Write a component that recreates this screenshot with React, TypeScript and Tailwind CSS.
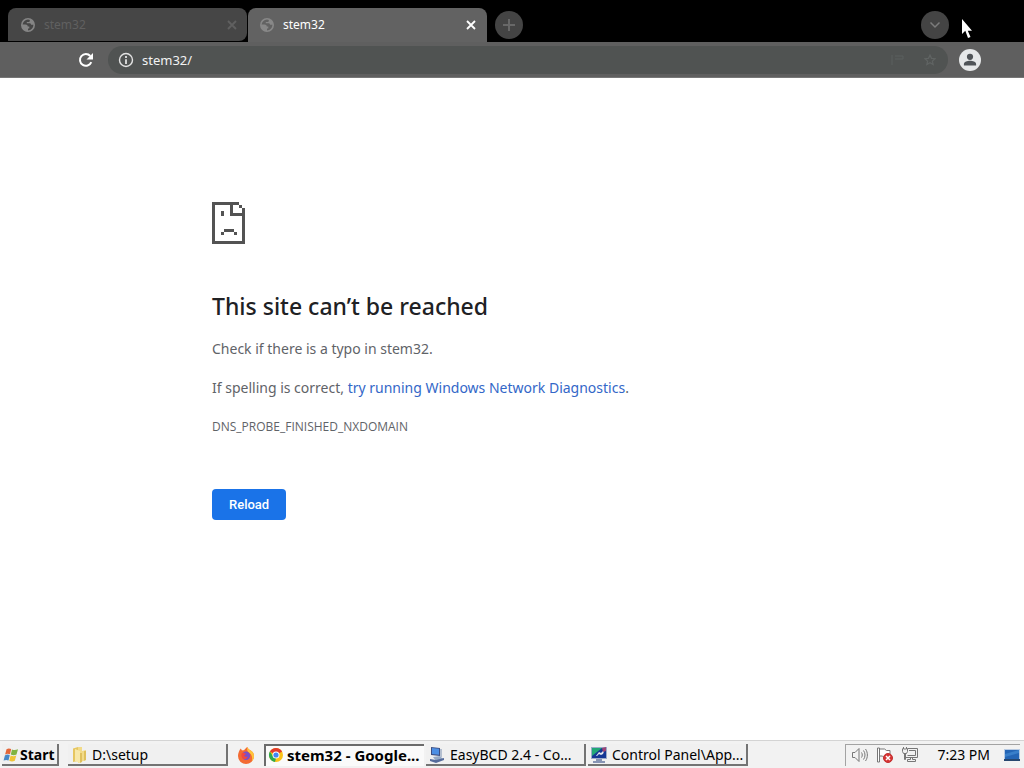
import { type ReactNode } from "react";

const segoe = "font-['Noto_Sans','Open_Sans',sans-serif]";

function Globe() {
  return (
    <svg viewBox="0 0 14 14" className="size-[14px] shrink-0" aria-hidden="true">
      <circle cx="7" cy="7" r="6.200" fill="none" stroke="currentColor" strokeWidth="1.600" />
      <path
        fill="currentColor"
        d="M1 6.500 4.500 6.600c1.400 0 2.300.8 2.300 1.900h1.500v2H7v2.800C3.500 13.300.8 10.500.8 7ZM8.800 1.200v1.500c0 .8-.6 1.300-1.400 1.300H5.800v1.300h2.700c1 0 1.500.6 1.500 1.500h2.600l.5-.5C13 3.600 11.200 1.700 8.800 1.200Z"
      />
    </svg>
  );
}

function CloseGlyph() {
  return (
    <svg viewBox="0 0 10 10" className="size-[10px]" fill="none" stroke="currentColor" strokeWidth="1.8" aria-hidden="true">
      <path d="m1 1 8 8M9 1 1 9" />
    </svg>
  );
}

function PageError() {
  return (
    <svg viewBox="0 0 33 42" className="h-[42px] w-[33px]" fill="#535353" shapeRendering="crispEdges" aria-hidden="true">
      <path d="M0 0h27v3h3v3h3v36H0ZM3 3v36h27V14H18V3Zm18 0v8h9V6h-3V3Z" fillRule="evenodd" />
      <path d="M9 9h3v5H9ZM12 27h10v3H12ZM9 30h3v3H9ZM22 30h3v3h-3Z" />
    </svg>
  );
}

function WindowsFlag() {
  return (
    <svg viewBox="0 0 16 16" className="size-4 shrink-0" aria-hidden="true">
      <path d="M3.500 2.200C5.200 1 6.800 1.300 8.200 2L7 7.300c-1.600-.8-3.200-.8-4.900.2Z" fill="#e3673a" />
      <path d="M9 2.400c1.900.9 3.800.8 6-.2l-1.500 5.300c-2 1.100-3.800.9-5.700.1Z" fill="#7fb441" />
      <path d="M1.900 8.400c1.700-1 3.300-1 4.900-.2l-1.300 5.200C4 12.700 2.300 12.700.6 13.600Z" fill="#4688c8" />
      <path d="M7.600 8.500c1.900.9 3.800 1 5.700 0l-1.500 5.200c-1.900 1-3.700.9-5.500.1Z" fill="#efc436" />
    </svg>
  );
}

function Folder() {
  return (
    <svg viewBox="0 0 16 16" className="size-4 shrink-0" aria-hidden="true">
      <path d="M2 1.500 7 0v14l-5 1Z" fill="#e6c660" />
      <path d="M7 0h4v4l4-1v10l-8 3Z" fill="#f2db88" />
      <path d="m4 2 5 2v12l-5-2Z" fill="#f8e8a8" />
      <path d="M9 6h2v9l-2 1ZM13 4h2v9l-2 .8Z" fill="#dfc05c" />
    </svg>
  );
}

function Firefox() {
  return (
    <svg viewBox="0 0 18 18" className="size-[18px]" aria-hidden="true">
      <path d="M3.800 2.500 5 4.400c.8-.3 1.500-.3 2.100-.1C8 2.900 9.200 1.700 10.500 1c.1 1.200 1 2 2 2.700C15.400 5 17 7.200 17 10a8 8 0 0 1-16 0c0-2.700 1.200-5.600 2.800-7.500Z" fill="#f36a32" />
      <path d="M10.500 1c.1 1.200 1 2 2 2.700C15.400 5 17 7.200 17 10c0 2-.8 4-2.200 5.500 1-3.500.2-7-2.600-8.700C10.300 5.600 9.600 3.500 10.500 1Z" fill="#ffc53a" />
      <circle cx="9" cy="9.800" r="4.200" fill="#7950c8" />
      <path d="M4.500 7.500c2-1.200 3 .2 4.500 0-.2 1.300-1.700 1.300-2 2.200.8 1.300 2.300 1.300 3.800.5-.7 2.300-2.300 3.500-4.300 2.600-1.600-.8-2.300-3-2-5.300Z" fill="#f5483c" />
    </svg>
  );
}

function Chrome() {
  return (
    <svg viewBox="0 0 16 16" className="size-4 shrink-0" aria-hidden="true">
      <circle cx="8" cy="8" r="7" fill="#fbc116" />
      <path d="M8 8 1.900 4.500a7 7 0 0 1 12.200 0Z" fill="#e33b2e" />
      <path d="M1.900 4.500 5.500 10 8 11l-1 4A7 7 0 0 1 1.900 4.500Z" fill="#2da94f" />
      <circle cx="8" cy="8" r="3.500" fill="#fff" />
      <circle cx="8" cy="8" r="2.600" fill="#4285f4" />
    </svg>
  );
}

function BootDisk() {
  return (
    <svg viewBox="0 0 16 16" className="size-4 shrink-0" aria-hidden="true">
      <path d="m2 0 9 1v8L2 8Z" fill="#3e4f82" />
      <path d="m3 1 7 .8v6L3 7.100Z" fill="#4d8fe4" />
      <path d="m4 10 7-1 3 3-7 2Z" fill="#96aac6" />
      <path d="m1 12 6 1 8-2v2l-8 3-6-2Z" fill="#566b9b" />
      <path d="M11 2h2v8h-2Z" fill="#b4bfd0" />
    </svg>
  );
}

function ControlPanel() {
  return (
    <svg viewBox="0 0 16 16" className="size-4 shrink-0" aria-hidden="true">
      <path d="M0 0h16v12H0Z" fill="#9cabc9" />
      <path d="M1 1h14v10H1Z" fill="#143795" />
      <path d="M1 1h10L1 9Z" fill="#20a776" />
      <path d="m5 9 3-4 2 1 4-4-2 5-2 1-2-1-2 2Z" fill="#e2e7ed" />
      <path d="m11 1 4-1v4l-3 1Z" fill="#9c4576" />
      <path d="M5 12h6v2h3v2H2v-2h3Z" fill="#8794b4" />
    </svg>
  );
}

function TaskButton({ icon, label, active = false }: { icon: ReactNode; label: string; active?: boolean }) {
  return (
    <button
      type="button"
      aria-pressed={active}
      className={
        active
          ? "flex h-[22px] w-40 min-w-0 items-center gap-[3px] border-t-2 border-l-2 border-[#6b6b6b] bg-[#fafafa] px-[2px] pb-[2px] text-[15px] leading-4 font-bold"
          : "flex h-[22px] w-40 min-w-0 items-center gap-[5px] border-r-2 border-b-2 border-[#737373] bg-[#f0f0f0] px-[3px] pt-[2px] text-[14px] leading-4"
      }
    >
      {icon}
      <span className="whitespace-nowrap">{label}</span>
    </button>
  );
}

function TabStrip() {
  return (
    <div className="relative flex h-[42px] items-start bg-black pt-2 pr-[75px] pl-2 text-[12px]">
      <div className="flex h-[33px] w-[239px] items-center rounded-lg rounded-bl-none bg-[#464646] pr-[10px] pl-[13px] text-[#606060]">
        <span className="flex text-[#858585]"><Globe /></span>
        <span className="ml-[9px] flex-1">stem32</span>
        <button type="button" aria-label="Close background tab"><CloseGlyph /></button>
      </div>
      <div className="ml-px flex h-[34px] w-[239px] items-center rounded-t-lg bg-[#626262] pr-[11px] pb-px pl-3 text-white">
        <span className="flex text-[#888888]"><Globe /></span>
        <span className="ml-[9px] flex-1">stem32</span>
        <button type="button" aria-label="Close tab"><CloseGlyph /></button>
      </div>
      <button type="button" aria-label="New tab" className="mt-[3px] ml-2 grid size-7 place-items-center rounded-full bg-[#444444] text-[#686868]">
        <svg viewBox="0 0 14 14" className="size-[14px]" stroke="currentColor" strokeWidth="2" aria-hidden="true"><path d="M7 1v12M1 7h12" /></svg>
      </button>
      <button type="button" aria-label="Search tabs" className="mt-[3px] ml-auto grid size-7 place-items-center rounded-full bg-[#444444] text-[#7c7c7c]">
        <svg viewBox="0 0 12 8" className="h-2 w-3" fill="none" stroke="currentColor" strokeWidth="1.500" aria-hidden="true"><path d="m1.500 1.500 4.500 4.500 4.500-4.500" /></svg>
      </button>
      <svg viewBox="0 0 12 20" className="absolute top-[18px] right-[51px] h-5 w-3" aria-hidden="true">
        <path d="M1 1v15l3.300-3.200L7 20l2.500-1-2.700-6.200H11Z" fill="#fff" />
      </svg>
    </div>
  );
}

function Toolbar() {
  return (
    <div className="flex h-9 items-center border-b border-[#777777] bg-[#5f5f5f] pr-[43px] pl-[78px]">
      <button type="button" aria-label="Reload page" className="text-white">
        <svg viewBox="0 0 16 16" className="size-4" aria-hidden="true">
          <path d="M13.300 10.200A5.900 5.900 0 1 1 12.300 4" fill="none" stroke="currentColor" strokeWidth="2" />
          <path d="M15 1v6.500H8.500Z" fill="currentColor" />
        </svg>
      </button>
      <div className="ml-[14px] flex h-7 min-w-0 flex-1 items-center rounded-full bg-[#505352] px-[10px] text-[#e2e2e2]">
        <svg viewBox="0 0 16 16" className="size-4 shrink-0" fill="none" stroke="currentColor" aria-hidden="true">
          <circle cx="8" cy="8" r="6.500" strokeWidth="1.400" />
          <path d="M8 4v2M8 7.200V12" strokeWidth="1.800" />
        </svg>
        <input aria-label="Address" defaultValue="stem32/" className="ml-2 min-w-0 flex-1 bg-transparent text-[13px] leading-5 text-[#f2f2f2] outline-none" />
        <button type="button" aria-label="Translate" className="mr-5 text-[#5b605f]">
          <svg viewBox="0 0 14 14" className="size-[14px]" fill="none" stroke="currentColor" aria-hidden="true"><path d="M2 2v10M5 3h8v3H5" /></svg>
        </button>
        <button type="button" aria-label="Bookmark" className="mr-[2px] text-[#606463]">
          <svg viewBox="0 0 16 16" className="size-3" fill="none" stroke="currentColor" strokeWidth="1.600" aria-hidden="true"><path d="m8 1.500 2 4.300 4.700.5-3.500 3.200 1 4.600L8 11.700l-4.200 2.400 1-4.600L1.300 6.300 6 5.800Z" /></svg>
        </button>
      </div>
      <button type="button" aria-label="Profile" className="ml-[11px]">
        <svg viewBox="0 0 22 22" className="size-[22px]" aria-hidden="true">
          <circle cx="11" cy="11" r="11" fill="#e6e8e9" />
          <circle cx="11" cy="7.800" r="3.100" fill="#505458" />
          <path d="M4.900 16.500v-1.400c0-2.200 3.500-3.300 6.100-3.300s6.100 1.100 6.100 3.300v1.400Z" fill="#505458" />
        </svg>
      </button>
    </div>
  );
}

function Taskbar() {
  return (
    <footer className="flex h-7 items-center border-t border-[#d4d4d4] bg-[#f2f2f2] pr-1 pl-[2px] text-black">
      <button type="button" className="flex h-[22px] w-[57px] items-center gap-px border-r-2 border-b-2 border-[#737373] bg-[#f0f0f0] pt-[2px] pl-px text-[14px] leading-4 font-bold">
        <WindowsFlag />
        Start
      </button>
      <nav aria-label="Open windows" className="ml-[9px] flex min-w-0 items-center">
        <TaskButton icon={<Folder />} label="D:\setup" />
        <button type="button" aria-label="Firefox" className="grid w-9 place-items-center"><Firefox /></button>
        <div className="flex min-w-0 gap-[2px]">
          <TaskButton icon={<Chrome />} label="stem32 - Google..." active />
          <TaskButton icon={<BootDisk />} label="EasyBCD 2.4 - Co..." />
          <TaskButton icon={<ControlPanel />} label="Control Panel\App..." />
        </div>
      </nav>
      <div className="ml-auto flex h-[22px] items-center border-t border-l border-[#a3a3a3] pl-[5px]">
        <div className="flex items-center gap-[7px] text-[#777777]">
          <svg viewBox="0 0 18 18" className="size-[18px]" fill="none" stroke="currentColor" aria-hidden="true">
            <path d="M1.500 6.500h2.500L8 2.500v13L4 11.500H1.500ZM10.500 6.500c1 1.500 1 3.500 0 5M12.500 4.500c2 2.500 2 6.500 0 9M14.500 3c2.500 3.500 2.500 8.500 0 12" />
          </svg>
          <svg viewBox="0 0 18 18" className="size-[18px]" fill="none" stroke="currentColor" aria-hidden="true">
            <path d="M1.500 2v14h2V2ZM3.500 3h5l2 1.500H14v7H8L6.500 10h-3" fill="#fff" />
            <circle cx="12" cy="12" r="4.500" fill="#d73535" stroke="#c22f2f" />
            <path d="m10 10 4 4m0-4-4 4" stroke="#fff" strokeWidth="1.500" />
          </svg>
          <svg viewBox="0 0 18 18" className="size-[18px]" fill="none" stroke="currentColor" aria-hidden="true">
            <path d="M6.500 2.500h10v9h-12V8M8 4.500h6.500v5h-8M9.500 11.500v2h-3v2h8v-2h-3v-2M1.500 2.500v3l1 2h3l1-2v-3M3.500 7.500v6h1v-6M2.500 1v2h3V1" />
          </svg>
        </div>
        <time className="ml-[18px] text-[14px] leading-5 whitespace-nowrap">7:23 PM</time>
        <button type="button" aria-label="Show desktop" className="ml-[14px]">
          <svg viewBox="0 0 16 14" className="h-[14px] w-4" aria-hidden="true">
            <path d="M0 1h16v12H0Z" fill="#b8cbe4" />
            <path d="M1 2h14v9H1Z" fill="#2465b5" />
            <path d="m1 6 14-4v3L1 9Z" fill="#397fca" />
            <path d="M0 11h16v2H0Z" fill="#27476f" />
          </svg>
        </button>
      </div>
    </footer>
  );
}

export default function App() {
  return (
    <div className={`${segoe} flex min-h-screen flex-col bg-white`}>
      <header>
        <TabStrip />
        <Toolbar />
      </header>
      <main className="mx-auto w-full max-w-[600px] flex-1 pt-[124px] text-[#5f6368]">
        <PageError />
        <h1 className="mt-[46px] text-[23px] leading-8 font-medium text-[#202124]">This site can’t be reached</h1>
        <p className="mt-[17px] text-[14px] leading-5">Check if there is a typo in stem32.</p>
        <p className="mt-[19px] text-[14px] leading-5">
          If spelling is correct, <a href="#diagnostics" className="text-[#3367c8]">try running Windows Network Diagnostics</a>.
        </p>
        <p className="mt-[19px] font-['Open_Sans','Noto_Sans',sans-serif] text-[12px] leading-5">DNS_PROBE_FINISHED_NXDOMAIN</p>
        <button type="button" className="mt-[52px] h-[31px] rounded bg-[#1a73e8] px-[17px] font-['Roboto',sans-serif] text-[13px] font-medium text-white">Reload</button>
      </main>
      <Taskbar />
    </div>
  );
}
